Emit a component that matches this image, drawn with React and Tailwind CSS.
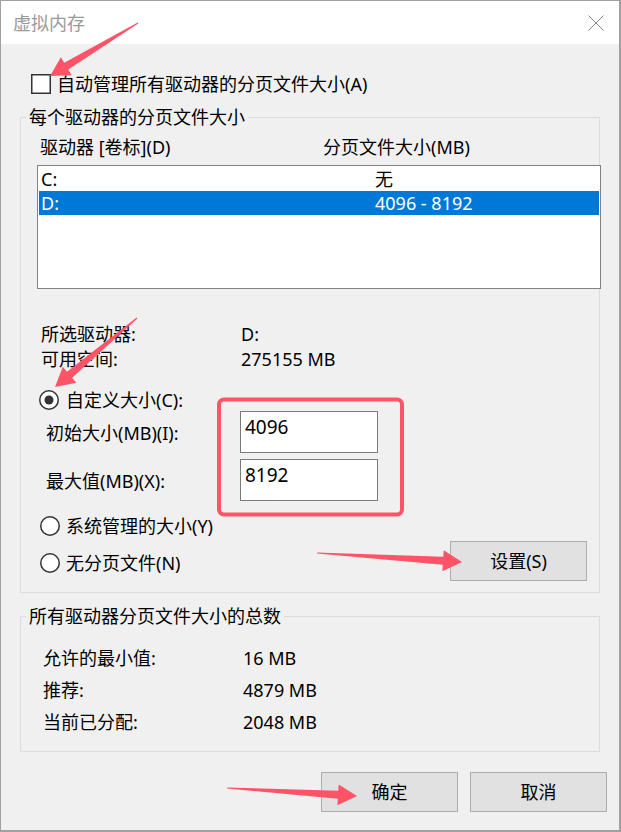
import React from 'react';

// red annotation arrows drawn over the dialog: tail -> tip
const arrows = [
    { from: [138, 23], to: [50, 76] },
    { from: [137, 318], to: [55, 387] },
    { from: [317, 553], to: [462, 562] },
    { from: [227, 788], to: [357, 796] },
];

const arrowPoints = ({ from, to }) => {
    const [x1, y1] = from;
    const [x2, y2] = to;
    const len = Math.hypot(x2 - x1, y2 - y1);
    const dx = (x2 - x1) / len;
    const dy = (y2 - y1) / len;
    const nx = -dy;
    const ny = dx;
    const bx = x2 - dx * 19;
    const by = y2 - dy * 19;
    const pts = [
        [x1 + nx * 0.6, y1 + ny * 0.6],
        [bx + nx * 4, by + ny * 4],
        [bx + nx * 10.5, by + ny * 10.5],
        [x2, y2],
        [bx - nx * 10.5, by - ny * 10.5],
        [bx - nx * 4, by - ny * 4],
        [x1 - nx * 0.6, y1 - ny * 0.6],
    ];
    return pts.map(p => p.map(v => v.toFixed(1)).join(',')).join(' ');
};

const Checkbox = () => (
    <svg width="20" height="20" viewBox="0 0 20 20" className="shrink-0">
        <rect x="0.75" y="0.75" width="18.5" height="18.5" fill="#fff" stroke="#333" strokeWidth="1.5" />
    </svg>
);

const Radio = ({ checked }) => (
    <svg width="20" height="20" viewBox="0 0 20 20" className="shrink-0">
        <circle cx="10" cy="10" r="9.25" fill="#fff" stroke="#333" strokeWidth="1.5" />
        {checked && <circle cx="10" cy="10" r="4.5" fill="#333" />}
    </svg>
);

const Button = ({ children }) => (
    <div className="w-[137px] h-[40px] border border-[#adadad] bg-[#e1e1e1] flex items-center justify-center">
        {children}
    </div>
);

const drives = [
    { name: 'C:', size: '无', selected: false },
    { name: 'D:', size: '4096 - 8192', selected: true },
];

const totals = [
    ['允许的最小值:', '16 MB'],
    ['推荐:', '4879 MB'],
    ['当前已分配:', '2048 MB'],
];

export default function App() {
    return (
        <div className="w-[621px] h-[832px] relative font-['Noto_Sans','Noto_Sans_CJK_SC',sans-serif] text-[18px] leading-[24px] text-black">
            <div className="w-full h-full flex flex-col border-l border-t border-r-2 border-b-2 border-[#a0a0a0] bg-[#f0f0f0]">
                {/* title bar */}
                <div className="h-[43px] shrink-0 bg-white flex items-center justify-between pl-[12px] pr-[15px]">
                    <span className="text-[#9a9a9a]">虚拟内存</span>
                    <svg width="16" height="16" viewBox="0 0 16 16">
                        <path d="M0.5 0.5 L15.5 15.5 M15.5 0.5 L0.5 15.5" stroke="#888" strokeWidth="1" />
                    </svg>
                </div>

                <div className="flex items-center h-[20px] mt-[30px] ml-[30px]">
                    <Checkbox />
                    <span className="ml-[6px]">自动管理所有驱动器的分页文件大小(A)</span>
                </div>

                <fieldset className="mt-[11px] ml-[19px] w-[580px] min-w-0 border border-[#dcdcdc] pb-[11px]">
                    <legend className="ml-[5px] px-[3px]">每个驱动器的分页文件大小</legend>

                    <div className="flex mt-[6px] pl-[19px]">
                        <span className="w-[283px]">驱动器 [卷标](D)</span>
                        <span>分页文件大小(MB)</span>
                    </div>

                    <div className="mt-[6px] ml-[16px] w-[564px] h-[124px] border border-[#828282] bg-white p-[1px]">
                        {drives.map(d => (
                            <div
                                key={d.name}
                                className={`h-[24px] flex items-center pl-[2px] ${d.selected ? 'bg-[#0078d7] text-white' : ''}`}
                            >
                                <span className="w-[334px]">{d.name}</span>
                                <span>{d.size}</span>
                            </div>
                        ))}
                    </div>

                    <div className="mt-[32px] pl-[20px]">
                        <div className="h-[25px] flex items-center">
                            <span className="w-[200px]">所选驱动器:</span>
                            <span>D:</span>
                        </div>
                        <div className="h-[25px] flex items-center">
                            <span className="w-[200px]">可用空间:</span>
                            <span>275155 MB</span>
                        </div>
                    </div>

                    <div className="mt-[18px] h-[22px] flex items-center pl-[18px]">
                        <Radio checked />
                        <span className="ml-[7px]">自定义大小(C):</span>
                    </div>

                    <div className="h-[42px] flex items-center pl-[25px]">
                        <span className="w-[194px] pt-[2px]">初始大小(MB)(I):</span>
                        <div className="w-[138px] h-[42px] border border-[#7a7a7a] bg-white pl-[4px] pt-[3px] text-[19px]">4096</div>
                    </div>
                    <div className="h-[42px] mt-[6px] flex items-center pl-[25px]">
                        <span className="w-[194px] pt-[2px]">最大值(MB)(X):</span>
                        <div className="w-[138px] h-[42px] border border-[#7a7a7a] bg-white pl-[4px] pt-[3px] text-[19px]">8192</div>
                    </div>

                    <div className="mt-[13px] h-[24px] flex items-center pl-[19px]">
                        <Radio />
                        <span className="ml-[6px]">系统管理的大小(Y)</span>
                    </div>

                    <div className="mt-[3px] h-[40px] flex items-center justify-between pl-[19px] pr-[12px]">
                        <div className="flex items-center mt-[4px]">
                            <Radio />
                            <span className="ml-[6px]">无分页文件(N)</span>
                        </div>
                        <Button>设置(S)</Button>
                    </div>
                </fieldset>

                <fieldset className="mt-[11px] ml-[19px] w-[580px] min-w-0 border border-[#dcdcdc] pb-[13px]">
                    <legend className="ml-[5px] px-[3px]">所有驱动器分页文件大小的总数</legend>
                    <div className="mt-[14px] pl-[22px]">
                        {totals.map(([label, value]) => (
                            <div key={label} className="h-[32px] flex items-center">
                                <span className="w-[200px]">{label}</span>
                                <span>{value}</span>
                            </div>
                        ))}
                    </div>
                </fieldset>

                <div className="mt-[20px] flex justify-end gap-[12px] pr-[12px]">
                    <Button>确定</Button>
                    <Button>取消</Button>
                </div>
            </div>

            {/* annotations */}
            <svg className="absolute top-0 left-0 pointer-events-none" width="621" height="832" viewBox="0 0 621 832">
                <rect x="219" y="399.5" width="183" height="115" rx="5" fill="none" stroke="#ff5468" strokeWidth="4" />
                {arrows.map((a, i) => (
                    <polygon key={i} points={arrowPoints(a)} fill="#ff5468" />
                ))}
            </svg>
        </div>
    );
}
